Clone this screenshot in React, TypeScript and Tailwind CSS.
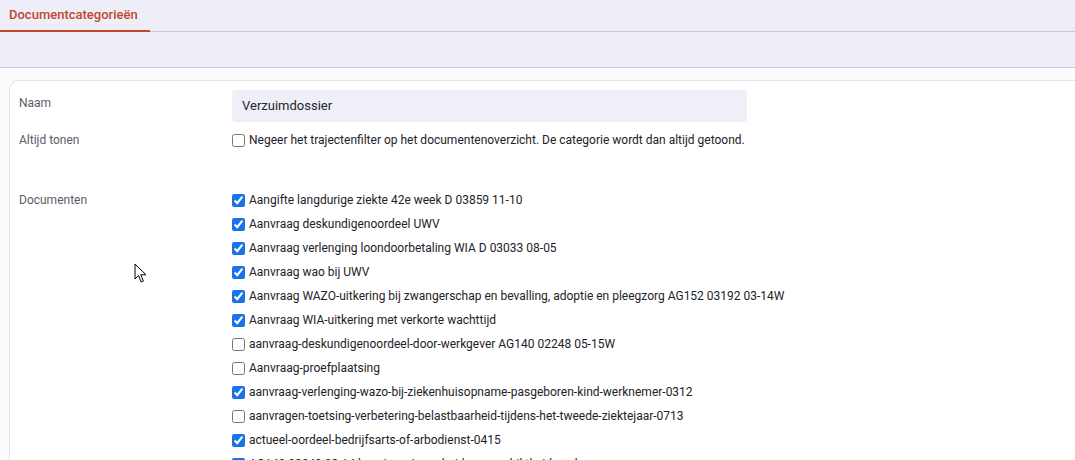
import React from "react";

const documenten: { label: string; checked: boolean }[] = [
  { label: "Aangifte langdurige ziekte 42e week D 03859 11-10", checked: true },
  { label: "Aanvraag deskundigenoordeel UWV", checked: true },
  { label: "Aanvraag verlenging loondoorbetaling WIA D 03033 08-05", checked: true },
  { label: "Aanvraag wao bij UWV", checked: true },
  {
    label:
      "Aanvraag WAZO-uitkering bij zwangerschap en bevalling, adoptie en pleegzorg AG152 03192 03-14W",
    checked: true,
  },
  { label: "Aanvraag WIA-uitkering met verkorte wachttijd", checked: true },
  { label: "aanvraag-deskundigenoordeel-door-werkgever AG140 02248 05-15W", checked: false },
  { label: "Aanvraag-proefplaatsing", checked: false },
  {
    label: "aanvraag-verlenging-wazo-bij-ziekenhuisopname-pasgeboren-kind-werknemer-0312",
    checked: true,
  },
  {
    label: "aanvragen-toetsing-verbetering-belastbaarheid-tijdens-het-tweede-ziektejaar-0713",
    checked: false,
  },
  { label: "actueel-oordeel-bedrijfsarts-of-arbodienst-0415", checked: true },
  { label: "AG140 03249 03-14 kennisgeving-arbeidsongeschiktheid-werknemer", checked: true },
];

const Checkbox: React.FC<{ checked: boolean; label: string }> = ({ checked, label }) => (
  <label className="flex items-center h-[24px] text-[12px] text-[#222228] whitespace-nowrap">
    <input
      type="checkbox"
      defaultChecked={checked}
      className="m-0 mr-[4px] w-[13px] h-[13px] accent-[#1a73e8]"
    />
    {label}
  </label>
);

const App: React.FC = () => {
  return (
    <div className="relative h-[460px] overflow-hidden bg-[#fcfbfe] font-['Roboto','Liberation_Sans',sans-serif]">
      {/* tabs */}
      <div className="h-[32px] bg-[#eeeef8] border-b border-[#c9c7d5] flex">
        <div className="pl-[9px] pr-[12px] flex items-center border-b-2 border-[#c4472d] -mb-px text-[13px] font-medium text-[#c4472d]">
          Documentcategorieën
        </div>
      </div>
      {/* toolbar */}
      <div className="h-[36px] bg-[#eeeef8] border-b border-[#cfcddb]" />

      <div className="pt-[12px] pl-[9px]">
        <div className="bg-white border-l border-t border-[#e4e3ee] rounded-tl-[10px] pt-[9px] pl-[9px]">
          <div className="grid grid-cols-[213px_1fr]">
            <div className="pt-[1px] text-[12px] leading-[24px] text-[#5c5c68]">Naam</div>
            <div>
              <div className="w-[515px] h-[32px] bg-[#efeff8] rounded-[4px] px-[10px] flex items-center text-[13px] text-[#26262c]">
                Verzuimdossier
              </div>
            </div>

            <div className="mt-[7px] text-[12px] leading-[22px] text-[#5c5c68]">Altijd tonen</div>
            <div className="mt-[7px]">
              <label className="flex items-center h-[22px] text-[12px] text-[#222228] whitespace-nowrap">
                <input
                  type="checkbox"
                  className="m-0 mr-[4px] w-[13px] h-[13px] accent-[#1a73e8]"
                />
                Negeer het trajectenfilter op het documentenoverzicht. De categorie wordt dan altijd getoond.
              </label>
            </div>

            <div className="mt-[37px] text-[12px] leading-[24px] text-[#5c5c68]">Documenten</div>
            <div className="mt-[37px] flex flex-col">
              {documenten.map((d, i) => (
                <Checkbox key={i} label={d.label} checked={d.checked} />
              ))}
            </div>
          </div>
        </div>
      </div>

      {/* mouse cursor */}
      <svg
        className="absolute left-[134px] top-[263px]"
        width="14"
        height="21"
        viewBox="0 0 14 21"
      >
        <path
          d="M1 1 L1 16 L4.5 12.5 L7.2 19 L9.4 18 L6.8 11.8 L12 11.8 Z"
          fill="white"
          stroke="black"
          strokeWidth="1"
          strokeLinejoin="round"
        />
      </svg>
    </div>
  );
};

export default App;
